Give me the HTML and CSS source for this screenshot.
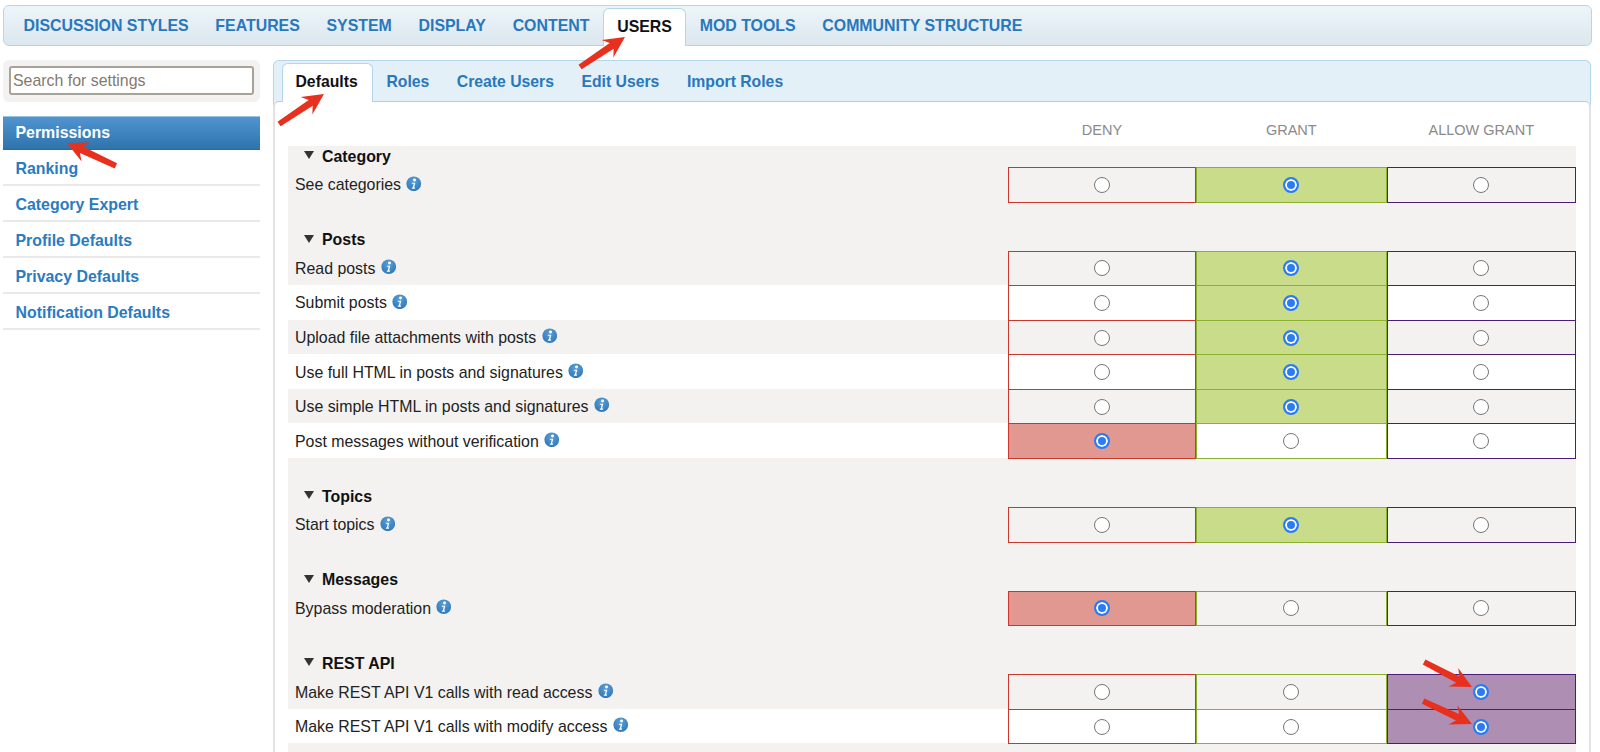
FILE: index.html
```html
<!DOCTYPE html>
<html lang="en">
<head>
<meta charset="utf-8">
<title>Permissions</title>
<link rel="stylesheet" href="styles.css">
</head>
<body>
<svg class="defs" width="0" height="0" aria-hidden="true">
  <defs>
    <radialGradient id="infofill" cx="50%" cy="30%" r="70%">
      <stop offset="0" stop-color="#5a9fd8"/>
      <stop offset="1" stop-color="#2f78b8"/>
    </radialGradient>
    <symbol id="info" viewBox="0 0 16 16">
      <circle cx="8" cy="8" r="7.6" fill="url(#infofill)"/>
      <circle cx="8.8" cy="4.2" r="1.5" fill="#fff"/>
      <path d="M6.2 6.9h3.4l-1.2 5h1.1l-.3 1.2H5.9l.3-1.2h.9l.8-3.8H5.9z" fill="#fff"/>
    </symbol>
    <symbol id="arrow" viewBox="-56 -12 58 24" overflow="visible">
      <path d="M-54-2.8L-16-3.6-21-10.5 0 0-21 10.5-16 3.6-54 2.8z" fill="#e8301f"/>
    </symbol>
  </defs>
</svg>

<nav class="topnav">
  <a class="toptab">DISCUSSION STYLES</a>
  <a class="toptab">FEATURES</a>
  <a class="toptab">SYSTEM</a>
  <a class="toptab">DISPLAY</a>
  <a class="toptab">CONTENT</a>
  <a class="toptab active">USERS</a>
  <a class="toptab">MOD TOOLS</a>
  <a class="toptab">COMMUNITY STRUCTURE</a>
</nav>

<div class="layout">
  <aside class="sidebar">
    <div class="searchbox"><input class="searchinput" type="text" placeholder="Search for settings"></div>
    <ul class="sidemenu">
      <li class="sideitem active">Permissions</li>
      <li class="sideitem">Ranking</li>
      <li class="sideitem">Category Expert</li>
      <li class="sideitem">Profile Defaults</li>
      <li class="sideitem">Privacy Defaults</li>
      <li class="sideitem">Notification Defaults</li>
    </ul>
  </aside>

  <main class="panel">
    <nav class="subnav">
      <a class="subtab active">Defaults</a>
      <a class="subtab">Roles</a>
      <a class="subtab">Create Users</a>
      <a class="subtab">Edit Users</a>
      <a class="subtab">Import Roles</a>
    </nav>
    <div class="panelbody">
      <div class="colheads">
        <span class="colhead">DENY</span>
        <span class="colhead">GRANT</span>
        <span class="colhead">ALLOW GRANT</span>
      </div>
      <div class="perms">
        <section class="group">
          <h3 class="grouphead">Category</h3>
          <div class="row">
            <div class="label">See categories <svg class="infoicon"><use href="#info"/></svg></div>
            <label class="cell deny"><input type="radio" class="radio" name="r1"></label>
            <label class="cell grant on"><input type="radio" class="radio" name="r1" checked></label>
            <label class="cell allow"><input type="radio" class="radio" name="r1"></label>
          </div>
        </section>
        <section class="group">
          <h3 class="grouphead">Posts</h3>
          <div class="row">
            <div class="label">Read posts <svg class="infoicon"><use href="#info"/></svg></div>
            <label class="cell deny"><input type="radio" class="radio" name="r2"></label>
            <label class="cell grant on"><input type="radio" class="radio" name="r2" checked></label>
            <label class="cell allow"><input type="radio" class="radio" name="r2"></label>
          </div>
          <div class="row white">
            <div class="label">Submit posts <svg class="infoicon"><use href="#info"/></svg></div>
            <label class="cell deny"><input type="radio" class="radio" name="r3"></label>
            <label class="cell grant on"><input type="radio" class="radio" name="r3" checked></label>
            <label class="cell allow"><input type="radio" class="radio" name="r3"></label>
          </div>
          <div class="row">
            <div class="label">Upload file attachments with posts <svg class="infoicon"><use href="#info"/></svg></div>
            <label class="cell deny"><input type="radio" class="radio" name="r4"></label>
            <label class="cell grant on"><input type="radio" class="radio" name="r4" checked></label>
            <label class="cell allow"><input type="radio" class="radio" name="r4"></label>
          </div>
          <div class="row white">
            <div class="label">Use full HTML in posts and signatures <svg class="infoicon"><use href="#info"/></svg></div>
            <label class="cell deny"><input type="radio" class="radio" name="r5"></label>
            <label class="cell grant on"><input type="radio" class="radio" name="r5" checked></label>
            <label class="cell allow"><input type="radio" class="radio" name="r5"></label>
          </div>
          <div class="row">
            <div class="label">Use simple HTML in posts and signatures <svg class="infoicon"><use href="#info"/></svg></div>
            <label class="cell deny"><input type="radio" class="radio" name="r6"></label>
            <label class="cell grant on"><input type="radio" class="radio" name="r6" checked></label>
            <label class="cell allow"><input type="radio" class="radio" name="r6"></label>
          </div>
          <div class="row white">
            <div class="label">Post messages without verification <svg class="infoicon"><use href="#info"/></svg></div>
            <label class="cell deny on"><input type="radio" class="radio" name="r7" checked></label>
            <label class="cell grant"><input type="radio" class="radio" name="r7"></label>
            <label class="cell allow"><input type="radio" class="radio" name="r7"></label>
          </div>
        </section>
        <section class="group">
          <h3 class="grouphead">Topics</h3>
          <div class="row">
            <div class="label">Start topics <svg class="infoicon"><use href="#info"/></svg></div>
            <label class="cell deny"><input type="radio" class="radio" name="r8"></label>
            <label class="cell grant on"><input type="radio" class="radio" name="r8" checked></label>
            <label class="cell allow"><input type="radio" class="radio" name="r8"></label>
          </div>
        </section>
        <section class="group">
          <h3 class="grouphead">Messages</h3>
          <div class="row">
            <div class="label">Bypass moderation <svg class="infoicon"><use href="#info"/></svg></div>
            <label class="cell deny on"><input type="radio" class="radio" name="r9" checked></label>
            <label class="cell grant"><input type="radio" class="radio" name="r9"></label>
            <label class="cell allow"><input type="radio" class="radio" name="r9"></label>
          </div>
        </section>
        <section class="group">
          <h3 class="grouphead">REST API</h3>
          <div class="row">
            <div class="label">Make REST API V1 calls with read access <svg class="infoicon"><use href="#info"/></svg></div>
            <label class="cell deny"><input type="radio" class="radio" name="r10"></label>
            <label class="cell grant"><input type="radio" class="radio" name="r10"></label>
            <label class="cell allow on"><input type="radio" class="radio" name="r10" checked></label>
          </div>
          <div class="row white">
            <div class="label">Make REST API V1 calls with modify access <svg class="infoicon"><use href="#info"/></svg></div>
            <label class="cell deny"><input type="radio" class="radio" name="r11"></label>
            <label class="cell grant"><input type="radio" class="radio" name="r11"></label>
            <label class="cell allow on"><input type="radio" class="radio" name="r11" checked></label>
          </div>
        </section>
      </div>
    </div>
  </main>
</div>

<svg class="arrows" viewBox="0 0 1600 752" aria-hidden="true">
  <use href="#arrow" width="58" height="24" x="-56" y="-12" transform="translate(625 37) rotate(-33.7)"/>
  <use href="#arrow" width="58" height="24" x="-56" y="-12" transform="translate(324 94) rotate(-33.7)"/>
  <use href="#arrow" width="58" height="24" x="-56" y="-12" transform="translate(67 143) rotate(205.1)"/>
  <use href="#arrow" width="58" height="24" x="-56" y="-12" transform="translate(1472 687) rotate(27.5)"/>
  <use href="#arrow" width="58" height="24" x="-56" y="-12" transform="translate(1472 724) rotate(25.1)"/>
</svg>
</body>
</html>
```
FILE: styles.css
```css
* { box-sizing: border-box; }
html, body { margin: 0; height: 752px; overflow: hidden; background: #fff; }
body { position: relative; font-family: "Liberation Sans", Arial, sans-serif; font-size: 15.9px; color: #222; padding-top: 5px; }
.defs { position: absolute; }

.topnav {
  display: flex; align-items: stretch; height: 41px; margin: 0 8px 0 3px; padding: 2px 0 0 6.2px;
  background: linear-gradient(#edf5fa, #dbe7ee); border: 1px solid #b5d5ea; border-radius: 6px;
}
.toptab {
  display: flex; align-items: center; padding: 0 12.35px 2px; font-size: 15.9px; font-weight: bold; color: #2878bd;
  border: 1px solid transparent; border-bottom: 0;
}
.toptab.active {
  padding: 0 13.4px 2px; background: #fff; color: #111; border-color: #b5d5ea; border-radius: 6px 6px 0 0; margin-bottom: -1px;
}

.layout { display: flex; margin: 14px 9px 0 3px; }
.sidebar { flex: 0 0 257px; margin-right: 13px; }
.searchbox { height: 42px; padding: 6px; background: #f3f2f1; border-radius: 6px; }
.searchinput {
  display: block; width: 100%; height: 29px; padding: 0 2px; font: 15.9px "Liberation Sans", Arial, sans-serif;
  border: 2px solid #a8a39a; border-radius: 3px; background: #fff; color: #222;
}
.searchinput::placeholder { color: #85796e; opacity: 1; }
.sidemenu { list-style: none; margin: 14px 0 0; padding: 0; }
.sideitem {
  display: flex; align-items: center; height: 36px; padding: 3px 0 0 12.5px; font-weight: bold; color: #2a7bbf;
  border-bottom: 2px solid #e9e9e9;
}
.sideitem.active {
  height: 34px; padding-top: 0; color: #fff; background: linear-gradient(#5095cf, #2f73ad); border-top: 1px solid #9cc3e2; border-bottom: 1px solid #2b6ba2;
}

.panel { flex: 1; min-width: 0; }
.subnav {
  display: flex; align-items: flex-start; height: 48px; margin-bottom: -7px; padding: 2px 0 0 7.5px;
  background: #e4f0f7; border: 1px solid #b5d5ea; border-bottom: 0; border-radius: 6px 6px 0 0;
}
.subtab {
  position: relative; z-index: 1; display: flex; align-items: center; height: 39px; padding: 0 12.75px 2px;
  font-size: 15.75px; font-weight: bold; color: #2878bd; border: 1px solid transparent; border-bottom: 0;
}
.subtab.active { padding: 0 14px 2px 13px; background: #fff; color: #111; border-color: #b5d5ea; border-radius: 6px 6px 0 0; }
.panelbody {
  position: relative; height: 660px; background: #fff; border: 2px solid #e2e2e2; border-top: 1px solid #c8c8c8; border-radius: 6px 6px 0 0;
}

.colheads { display: grid; grid-template-columns: 188px 190.5px 189.5px; justify-content: end; align-items: center; height: 44px; padding: 12px 13px 0 0; }
.colhead { text-align: center; font-size: 14.5px; color: #8a8a8a; }

.perms { margin: 0 13px; height: 620px; background: #f3f2f1; }
.group + .group { margin-top: 28.1px; }
.grouphead { display: flex; align-items: center; gap: 8px; height: 21px; margin: 0; padding: 0 0 0 16px; font-size: 15.9px; color: #111; }
.grouphead::before { content: ""; border-style: solid; border-width: 8px 5px 0; border-color: #333 transparent transparent; margin-top: -3px; }
.row { display: grid; grid-template-columns: 1fr 188px 190.5px 189.5px; height: 34.55px; }
.row.white { background: #fff; }
.label { display: flex; align-items: center; gap: 1px; padding: 1px 0 0 7px; font-size: 15.9px; white-space: pre; color: #222; }
.infoicon { width: 15.5px; height: 15.5px; margin-top: -4px; flex: none; }
.cell { display: flex; align-items: center; justify-content: center; height: 35.55px; border: 1px solid; }
.cell.deny { border-color: #c9382a; }
.cell.grant { border-color: #8ab02c; }
.cell.allow { border-color: #4b1c78; }
.cell.deny.on { background: #e09890; }
.cell.grant.on { background: #c9dc8a; }
.cell.allow.on { background: #ae8fb3; }
.radio {
  appearance: none; width: 16px; height: 16px; margin: 0; border: 1.5px solid #767676; border-radius: 50%; background: #fff;
}
.radio:checked { border: 2px solid #2a7bf6; background: #2a7bf6; box-shadow: inset 0 0 0 2px #fff; }

.arrows { position: absolute; left: 0; top: 0; z-index: 2; width: 1600px; height: 752px; pointer-events: none; }
```
